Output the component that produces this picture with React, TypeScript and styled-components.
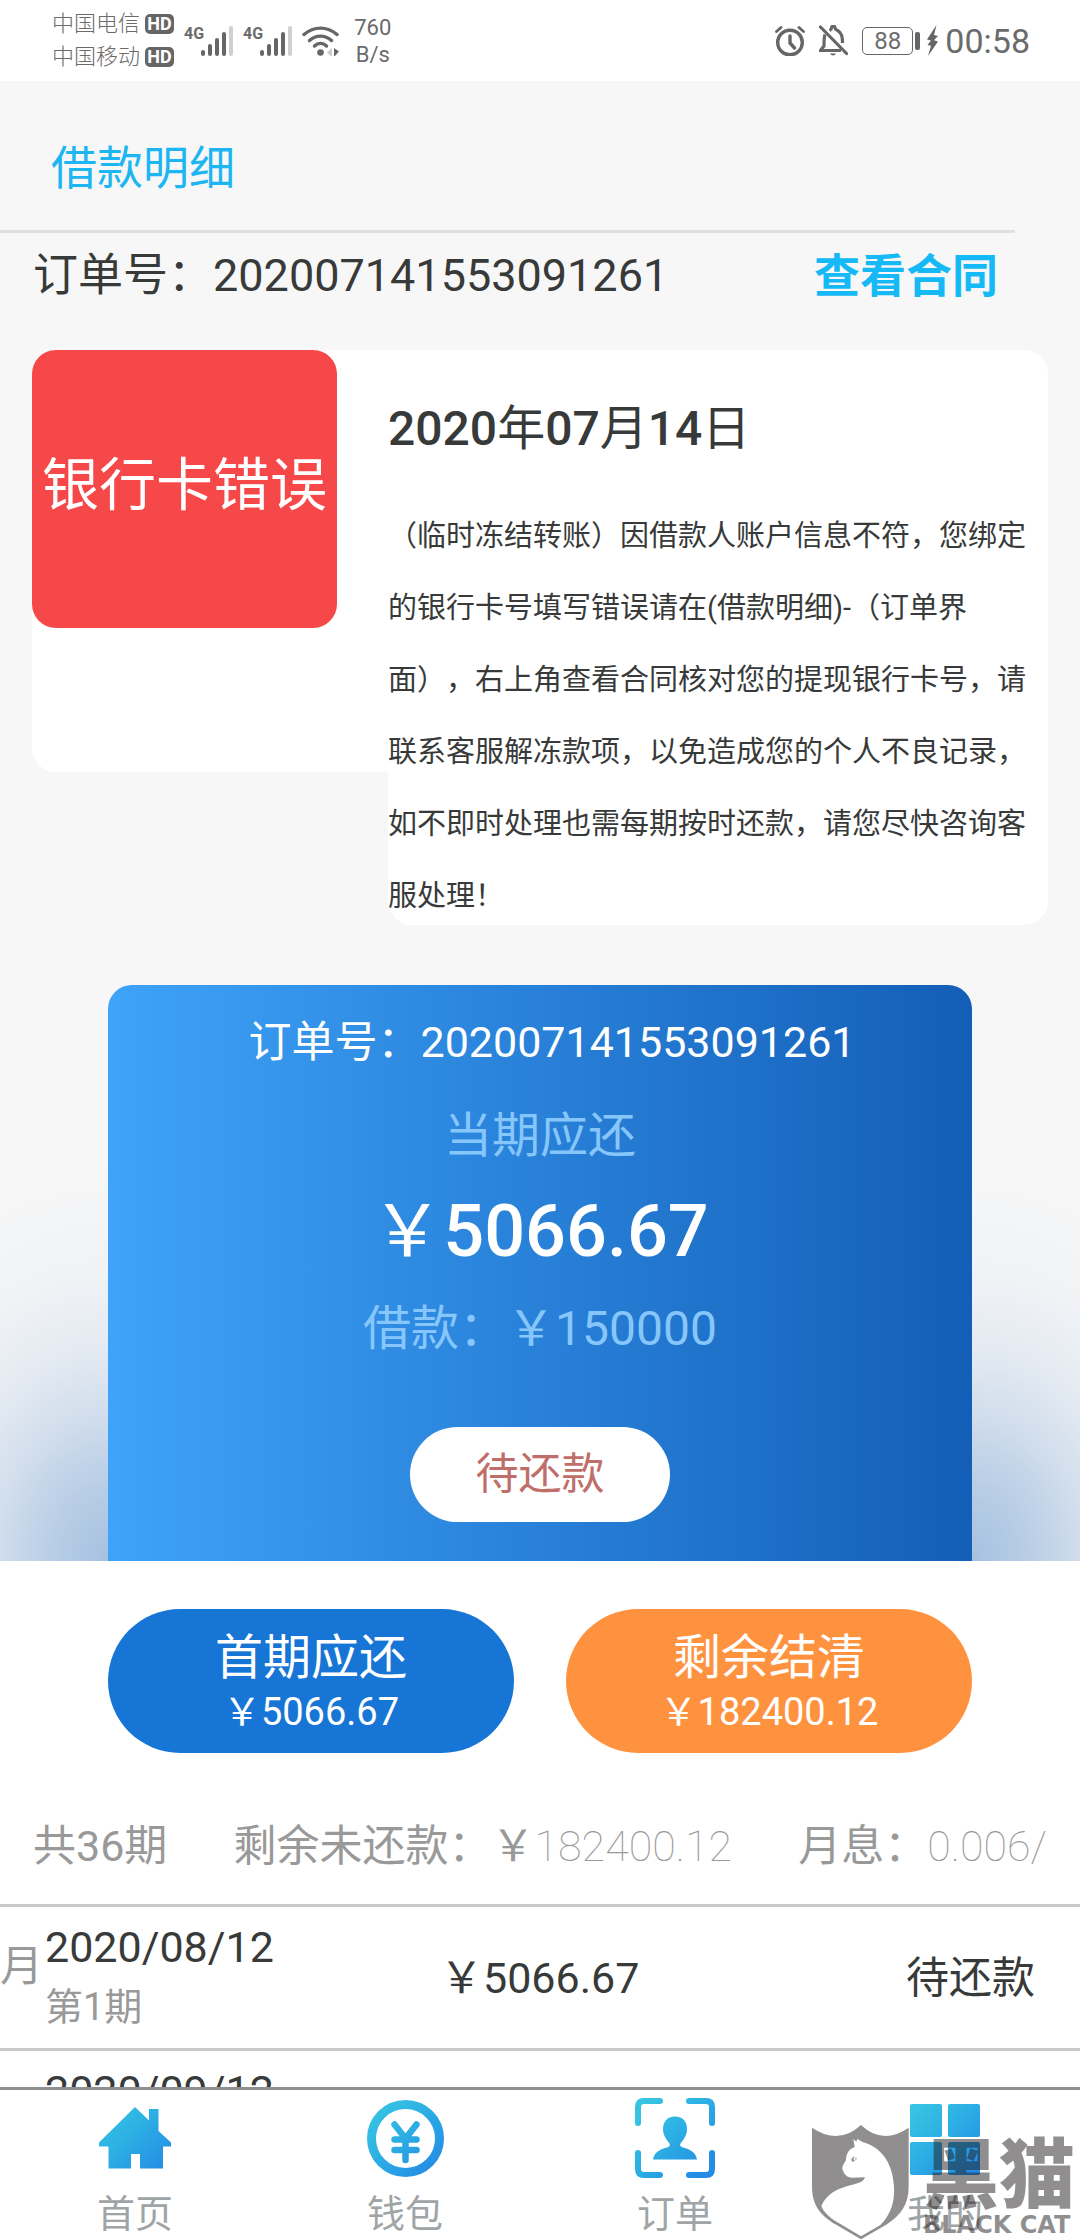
import React from 'react';
import styled, { createGlobalStyle } from 'styled-components';

const GlobalStyle = createGlobalStyle`
  *, *::before, *::after { box-sizing: border-box; }
  body {
    margin: 0;
    background: #fff;
    color: #383a3a;
    font-family: Roboto, "Noto Sans CJK SC", sans-serif;
    text-spacing-trim: space-all;
  }
  h1, h2, p { margin: 0; font-weight: 400; }
  a { color: inherit; text-decoration: none; }
  button { font-family: inherit; border: 0; padding: 0; cursor: pointer; }
`;

const Screen = styled.div`
  position: relative;
  display: flex;
  flex-direction: column;
  height: 100vh;
`;

/* ---------- status bar ---------- */

const StatusBar = styled.header`
  flex: none;
  display: flex;
  justify-content: space-between;
  height: 81px;
  padding: 0 50px 0 52px;
  background: #fff;
  color: #6b6b6b;
`;

const StatusGroup = styled.div<{ $gap: number }>`
  display: flex;
  align-items: center;
  gap: ${(p) => p.$gap}px;
`;

const Carriers = styled.div`
  display: grid;
  gap: 1px;
  font-size: 22px;
  font-weight: 300;
  line-height: 32px;
`;

const Carrier = styled.div`
  display: flex;
  align-items: center;
  gap: 5px;
`;

const HdBadge = styled.span`
  width: 29px;
  height: 20px;
  border-radius: 5px;
  background: #666;
  color: #fff;
  font-size: 18px;
  font-weight: 700;
  line-height: 20px;
  text-align: center;
`;

const Network = styled.span`
  display: flex;
  align-items: flex-start;
  font-size: 16px;
  font-weight: 700;
  line-height: 16px;

  svg { margin-left: -3px; }
`;

const Speed = styled.span`
  margin-left: 4px;
  font-size: 22px;
  line-height: 27px;
  text-align: center;
`;

const Battery = styled.span`
  display: flex;
  align-items: center;
  gap: 2px;
`;

const BatteryBody = styled.span`
  width: 51px;
  height: 28px;
  border: 1px solid #666;
  border-radius: 5px;
  font-size: 24px;
  line-height: 26px;
  text-align: center;
`;

const BatteryTip = styled.span`
  width: 5px;
  height: 18px;
  border-radius: 2px;
  background: #666;
`;

const Clock = styled.span`
  font-size: 34px;
`;

/* ---------- page ---------- */

const Content = styled.main`
  flex: 1;
  min-height: 0;
  overflow-y: auto;
  scrollbar-width: none;
`;

const glow = (x: string) => `radial-gradient(
  ellipse 300px 400px at ${x} 100%,
  rgba(21, 96, 184, 0.36) 0%,
  rgba(21, 96, 184, 0.27) 20%,
  rgba(21, 96, 184, 0.16) 38%,
  rgba(21, 96, 184, 0.08) 55%,
  rgba(21, 96, 184, 0.03) 72%,
  rgba(21, 96, 184, 0) 100%
)`;

const LoanSection = styled.section`
  background: ${glow('10%')}, ${glow('90%')}, #f7f7f7;
`;

const PageTitle = styled.h1`
  margin-right: 65px;
  padding: 62px 51px 37px;
  border-bottom: 3px solid #e0e0e0;
  color: #1eb6f2;
  font-size: 46px;
  line-height: 50px;
`;

const OrderRow = styled.div`
  display: flex;
  justify-content: space-between;
  padding: 18px 82px 49px 33px;
  font-size: 45px;
  line-height: 50px;
`;

const ContractLink = styled.a`
  color: #15b9f6;
  font-size: 46px;
  font-weight: 700;
`;

const Notice = styled.section`
  display: flex;
  align-items: flex-start;
  margin: 0 32px;
`;

const NoticeSide = styled.div`
  flex: none;
  width: 356px;
  height: 422px;
  border-radius: 24px 0 0 24px;
  background: #fff;
`;

const NoticeTag = styled.h2`
  width: 305px;
  padding: 94px 0 100px;
  border-radius: 24px;
  background: #f64848;
  color: #fff;
  font-size: 57px;
  line-height: 84px;
  text-align: center;
`;

const NoticeBody = styled.div`
  flex: 1;
  padding-top: 49px;
  border-radius: 0 24px 24px 24px;
  background: #fff;
`;

const Strong = styled.span`
  font-weight: 500;
`;

const NoticeDate = styled.p`
  font-size: 48px;
  line-height: 60px;
`;

const NoticeText = styled.p`
  margin: 41px 0 -7px;
  font-size: 29px;
  line-height: 72px;
`;

const BillCard = styled.section`
  display: flex;
  flex-direction: column;
  align-items: center;
  margin: 0 10%;
  padding: 27px 0 39px;
  border-radius: 24px 24px 0 0;
  background: linear-gradient(90deg, #3ea3f9, #135eb7);
  color: #fff;
`;

const BillArea = styled.div`
  padding-top: 60px;
`;

const BillOrder = styled.p`
  padding-left: 24px;
  font-size: 43px;
  line-height: 60px;
`;

const BillLabel = styled.p<{ $top: number }>`
  margin-top: ${(p) => p.$top}px;
  color: #87c6fb;
  font-size: 48px;
  line-height: 60px;
`;

const BillAmount = styled.p`
  margin-top: 24px;
  font-size: 72px;
  line-height: 84px;
`;

const BillStatus = styled.button`
  width: 260px;
  margin-top: 68px;
  border-radius: 48px;
  background: #fff;
  color: #bf6e69;
  font-size: 43px;
  line-height: 95px;
`;

const Actions = styled.div`
  display: grid;
  grid-template-columns: 1fr 1fr;
  gap: 52px;
  padding: 48px 10% 0;
`;

const ActionButton = styled.button<{ $color: string }>`
  display: grid;
  align-content: center;
  height: 144px;
  padding-top: 2px;
  border-radius: 72px;
  background: ${(p) => p.$color};
  color: #fff;
  font-size: 48px;
  line-height: 60px;
`;

const ActionAmount = styled.span`
  font-size: 38px;
  line-height: 48px;
`;

const Summary = styled.div`
  display: flex;
  justify-content: space-between;
  padding: 63px 33px 28px;
  color: #999;
  font-size: 43px;
  line-height: 60px;
  white-space: nowrap;
`;

const Thin = styled.span`
  font-weight: 100;
`;

const Schedule = styled.table`
  width: 100%;
  border-spacing: 0;
  table-layout: fixed;
  font-size: 43px;
  line-height: 60px;
`;

const Cell = styled.td<{ $width?: string; $align?: string; $right?: number }>`
  width: ${(p) => p.$width ?? 'auto'};
  height: 144px;
  padding: 0 ${(p) => p.$right ?? 0}px 0 0;
  border-top: 3px solid #c9c9c9;
  text-align: ${(p) => p.$align ?? 'left'};
`;

const UnitCell = styled(Cell)`
  padding-bottom: 24px;
  color: #999;
`;

const DateCell = styled(Cell)`
  padding-bottom: 2px;
`;

const Period = styled.span`
  display: block;
  color: #999;
  font-size: 38px;
`;

/* ---------- tab bar ---------- */

const TabBar = styled.nav`
  flex: none;
  display: grid;
  grid-template-columns: repeat(4, 1fr);
  padding: 7px 0 0;
  border-top: 3px solid #8d9090;
  background: #fff;
`;

const Tab = styled.a`
  display: grid;
  justify-items: center;
  gap: 9px;
  color: #9fa4a6;
  font-size: 38px;
  line-height: 52px;
`;

const Watermark = styled.div`
  position: absolute;
  right: 0;
  bottom: 0;
  display: flex;
  gap: 14px;
  padding-right: 4px;
  color: #231f20;
  opacity: 0.5;
  pointer-events: none;
`;

const WatermarkText = styled.div`
  display: grid;
  align-content: start;
  width: 153px;
  font-family: "DejaVu Sans", "Noto Sans CJK SC", sans-serif;
  font-size: 24px;
  font-weight: 700;
  line-height: 28px;
  white-space: nowrap;
`;

const WatermarkName = styled.span`
  padding-top: 2px;
  font-family: "Noto Sans CJK SC", sans-serif;
  font-size: 76px;
  font-weight: 900;
  line-height: 84px;
`;

/* ---------- drawings ---------- */

const Signal = () => (
  <svg width="32" height="30" viewBox="0 0 32 30" aria-hidden="true">
    {[24, 18, 12, 6, 0].map((top, i) => (
      <rect key={top} x={i * 7} y={top} width="4" height={30 - top} rx="2" fill={i === 4 ? '#d0d0d0' : '#666'} />
    ))}
  </svg>
);

const Wifi = () => (
  <svg width="38" height="30" viewBox="0 0 38 30" fill="none" stroke="#666" strokeWidth="3.4" strokeLinecap="round" aria-hidden="true">
    <path d="M2 8.5C12 0 25 0 35 8.5" />
    <path d="M7.5 14.5C14 8.6 23 8.6 29.500 14.500" />
    <path d="M12.500 20C16 16.500 21 16.500 24.500 20" />
    <circle cx="18.500" cy="26.500" r="3.300" fill="#666" stroke="none" />
    <path d="M30 22v9l-5-4.500z" fill="#ccc" stroke="none" />
    <path d="M32 22v9l5-5.500z" fill="#666" stroke="none" />
  </svg>
);

const Alarm = () => (
  <svg width="30" height="30" viewBox="0 0 30 30" fill="none" stroke="#666" strokeWidth="3.4" strokeLinecap="round" aria-hidden="true">
    <circle cx="15" cy="16.500" r="12.300" />
    <path d="M15 10v7l4.500 5" />
    <path d="M1.500 5.500L6 1.500M28.500 5.500L24 1.500" strokeWidth="2.800" />
  </svg>
);

const BellOff = () => (
  <svg width="29" height="31" viewBox="0 0 29 31" fill="none" stroke="#666" strokeWidth="3.200" aria-hidden="true">
    <path d="M6 9.500C5 12 5 15 5 21L1.500 25.500H22" />
    <path d="M10.500 5.500C12 4.800 12.500 4.500 12.500 3a1.800 1.800 0 0 1 3.600 0c0 1.500 1 1.800 2.500 2.500C23 8 23.500 12 23.500 18" />
    <path d="M1.500 2L27.500 28.500" strokeLinecap="round" />
    <path d="M11 28.500h6c-1 2.600-5 2.600-6 0z" fill="#666" stroke="none" />
  </svg>
);

const Bolt = () => (
  <svg width="13" height="31" viewBox="0 0 13 31" fill="#666" aria-hidden="true">
    <path d="M10.500 0L1 14.500l4 1L1.500 20l3.500.8L2 31l10-14.500-4-1.200 4-4.300-4-1z" />
  </svg>
);

const IconGradient = ({ id }: { id: string }) => (
  <linearGradient id={id} gradientUnits="userSpaceOnUse" x1="10" y1="10" x2="72" y2="72">
    <stop offset="0" stopColor="#37c4e2" />
    <stop offset="0.400" stopColor="#2db2e4" />
    <stop offset="1" stopColor="#248ce4" />
  </linearGradient>
);

const HomeIcon = () => (
  <svg width="82" height="82" viewBox="0 0 82 82" aria-hidden="true">
    <IconGradient id="g-home" />
    <path fill="url(#g-home)" d="M41 10L55 23.500V12H64.500V34L77 45.500V49.500H69V71.500H46V57H37V71.500H14.500V49.500H5V45.500Z" />
  </svg>
);

const WalletIcon = () => (
  <svg width="82" height="82" viewBox="0 0 82 82" fill="none" stroke="url(#g-wallet)" aria-hidden="true">
    <IconGradient id="g-wallet" />
    <circle cx="41.500" cy="41.500" r="34" strokeWidth="9" />
    <path d="M30.500 27.500L41.500 41.500L52.500 27.500M41.500 41.500V63M30.500 42.500H52.500M30.500 53H52.500" strokeWidth="6.500" strokeLinecap="round" />
  </svg>
);

const OrderIcon = () => (
  <svg width="82" height="82" viewBox="0 0 82 82" aria-hidden="true">
    <IconGradient id="g-order" />
    <path
      fill="none"
      stroke="url(#g-order)"
      strokeWidth="6"
      strokeLinecap="round"
      d="M4 26V10Q4 4 10 4H26M55 4H72Q78 4 78 10V26M78 56V72Q78 78 72 78H55M26 78H10Q4 78 4 72V56"
    />
    <path
      fill="url(#g-order)"
      d="M41 19.500C49 19.500 53 25 53 32C53 38 50 42 46.500 46.500C45.500 48.500 46.500 49.800 49 50.500C57 52.500 62 56 63 62.500H19C20 56 25 52.500 33 50.500C35.500 49.800 36.500 48.500 35.500 46.500C32 42 29 38 29 32C29 25 33 19.500 41 19.500Z"
    />
  </svg>
);

const MineIcon = () => (
  <svg width="82" height="82" viewBox="0 0 82 82" fill="url(#g-mine)" aria-hidden="true">
    <IconGradient id="g-mine" />
    <rect x="6" y="7" width="32" height="33" rx="2" />
    <rect x="44" y="7" width="32" height="33" rx="2" />
    <rect x="6" y="45" width="32" height="33" rx="2" />
    <rect x="44" y="45" width="32" height="33" rx="2" />
  </svg>
);

const CatShield = () => (
  <svg width="97" height="115" viewBox="0 0 291 345" aria-hidden="true">
    <path
      fill="currentColor"
      fillRule="evenodd"
      d="M0 8Q80 62 147 0Q212 62 290 8V185C290 240 265 270 225 298L147 343L70 298C25 270 0 240 0 185ZM124 42L128 66C108 72 102 92 102 105C94 118 90 125 91 132C95 145 102 156 118 158L159 157C150 190 60 170 28 243C35 262 52 277 75 291L147 334L205 300C240 265 248 225 246 185C242 120 215 70 152 51L136 42L133 50Z"
    />
    <path fill="currentColor" d="M118 103Q121 96 128 94L124 101L128 108Q122 112 119 108ZM131 96Q137 100 130 107Z" />
  </svg>
);

/* ---------- data ---------- */

const ORDER_NO = '202007141553091261';

const INSTALLMENTS = [
  { unit: '月', date: '2020/08/12', period: '第1期', amount: '￥5066.67', status: '待还款' },
  { unit: '', date: '2020/09/12', period: '第2期', amount: '￥5066.67', status: '待还款' },
];

const TABS = [
  { label: '首页', Icon: HomeIcon },
  { label: '钱包', Icon: WalletIcon },
  { label: '订单', Icon: OrderIcon },
  { label: '我的', Icon: MineIcon },
];

export default function App() {
  return (
    <Screen>
      <GlobalStyle />
      <StatusBar>
        <StatusGroup $gap={10}>
          <Carriers>
            {['中国电信', '中国移动'].map((name) => (
              <Carrier key={name}>
                {name}
                <HdBadge>HD</HdBadge>
              </Carrier>
            ))}
          </Carriers>
          <Network>4G<Signal /></Network>
          <Network>4G<Signal /></Network>
          <Wifi />
          <Speed>760<br />B/s</Speed>
        </StatusGroup>
        <StatusGroup $gap={14}>
          <Alarm />
          <BellOff />
          <StatusGroup $gap={6}>
            <Battery>
              <BatteryBody>88</BatteryBody>
              <BatteryTip />
            </Battery>
            <Bolt />
            <Clock>00:58</Clock>
          </StatusGroup>
        </StatusGroup>
      </StatusBar>

      <Content>
        <LoanSection>
          <PageTitle>借款明细</PageTitle>
          <OrderRow>
            <span>订单号：{ORDER_NO}</span>
            <ContractLink href="#contract">查看合同</ContractLink>
          </OrderRow>
          <Notice>
            <NoticeSide>
              <NoticeTag>银行卡错误</NoticeTag>
            </NoticeSide>
            <NoticeBody>
              <NoticeDate>
                <Strong>2020</Strong>年<Strong>07</Strong>月<Strong>14</Strong>日
              </NoticeDate>
              <NoticeText>
                （临时冻结转账）因借款人账户信息不符，您绑定的银行卡号填写错误请在(借款明细)-（订单界面），右上角查看合同核对您的提现银行卡号，请联系客服解冻款项，以免造成您的个人不良记录，如不即时处理也需每期按时还款，请您尽快咨询客服处理！
              </NoticeText>
            </NoticeBody>
          </Notice>
          <BillArea>
            <BillCard>
              <BillOrder>订单号：{ORDER_NO}</BillOrder>
              <BillLabel $top={34}>当期应还</BillLabel>
              <BillAmount>￥<Strong>5066.67</Strong></BillAmount>
              <BillLabel $top={25}>借款：￥150000</BillLabel>
              <BillStatus type="button">待还款</BillStatus>
            </BillCard>
          </BillArea>
        </LoanSection>

        <Actions>
          <ActionButton type="button" $color="#1775d6">
            首期应还
            <ActionAmount>￥5066.67</ActionAmount>
          </ActionButton>
          <ActionButton type="button" $color="#ff923f">
            剩余结清
            <ActionAmount>￥182400.12</ActionAmount>
          </ActionButton>
        </Actions>

        <Summary>
          <span>共36期</span>
          <span>剩余未还款：￥<Thin>182400.12</Thin></span>
          <span>月息：<Thin>0.006/</Thin></span>
        </Summary>

        <Schedule>
          <tbody>
            {INSTALLMENTS.map((row) => (
              <tr key={row.date}>
                <UnitCell $width="45px">{row.unit}</UnitCell>
                <DateCell $width="395px">
                  {row.date}
                  <Period>{row.period}</Period>
                </DateCell>
                <Cell>{row.amount}</Cell>
                <Cell $align="right" $right={45}>{row.status}</Cell>
              </tr>
            ))}
          </tbody>
        </Schedule>
      </Content>

      <TabBar>
        {TABS.map(({ label, Icon }) => (
          <Tab key={label} href={`#${label}`}>
            <Icon />
            {label}
          </Tab>
        ))}
      </TabBar>

      <Watermark>
        <CatShield />
        <WatermarkText>
          <WatermarkName>黑猫</WatermarkName>
          BLACK CAT
        </WatermarkText>
      </Watermark>
    </Screen>
  );
}
